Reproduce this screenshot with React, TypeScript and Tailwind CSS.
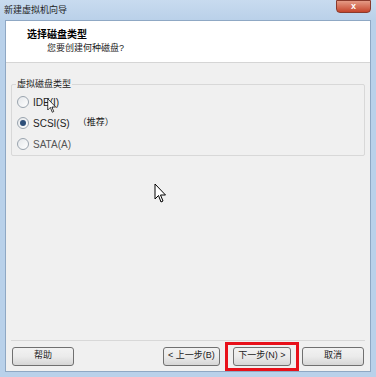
import React from "react";

const font = { fontFamily: '"Liberation Sans", "Noto Sans CJK SC", sans-serif' };

const Radio = ({ checked }: { checked?: boolean }) => (
  <span className="w-[12px] h-[12px] rounded-full border border-[#9aa4ae] bg-gradient-to-br from-[#e4e7ea] to-white flex items-center justify-center">
    {checked && <span className="w-[6px] h-[6px] rounded-full bg-[#2e4f79]" />}
  </span>
);

const Btn = ({ children, className = "" }: { children: React.ReactNode; className?: string }) => (
  <div
    className={
      "h-[19px] shrink-0 whitespace-nowrap border border-[#707070] rounded-[3px] bg-gradient-to-b from-[#f2f2f2] via-[#ebebeb] to-[#d6d6d6] flex items-center justify-center text-[9px] text-[#222] " +
      className
    }
  >
    {children}
  </div>
);

const Cursor = () => (
  <svg width="13" height="21" viewBox="0 0 13 21">
    <path d="M1 1 L1 16 L4.5 12.5 L7 19 L9 18 L6.5 12 L11.5 12 Z" fill="white" stroke="black" strokeWidth="1" />
  </svg>
);

export default function App() {
  return (
    <div className="w-[376px] h-[377px] bg-[#b9d1ea] flex flex-col overflow-hidden" style={font}>
      <div className="h-[20px] shrink-0 flex items-start justify-between bg-gradient-to-b from-[#c8dbef] to-[#bad1e9]">
        <span className="text-[9px] text-[#1e1e1e] pl-[4px] pt-[4px]">新建虚拟机向导</span>
        <div className="w-[35px] h-[13px] mr-[5px] rounded-b-[4px] bg-gradient-to-b from-[#e49a85] to-[#c4432a] border border-[#8a3a2c] flex items-center justify-center text-white text-[9px] font-bold">
          x
        </div>
      </div>
      <div className="flex-1 mx-[5px] mb-[5px] border border-[#8fa8c4] flex flex-col bg-[#f0f0f0]">
        <div className="h-[42px] shrink-0 bg-white border-b border-[#d5d5d5] pl-[21px] pt-[7px] leading-[13px]">
          <div className="font-bold text-black text-[10px]">选择磁盘类型</div>
          <div className="pl-[20px] pt-[1px] text-[#222] text-[9px]">您要创建何种磁盘?</div>
        </div>
        <div className="flex-1 flex flex-col relative">
          <div className="mt-[21px] mx-[5px] h-[72px] border border-[#d8d8d8] rounded-[2px] relative">
            <span className="absolute -top-[7px] left-[4px] px-[1px] bg-[#f0f0f0] text-[9px] leading-[12px] text-[#222]">虚拟磁盘类型</span>
            <div className="flex flex-col gap-[9px] pl-[5px] pt-[11px] text-[10px] text-[#222]">
              <div className="flex items-center gap-[4px] h-[12px]">
                <Radio />
                <span>IDE(I)</span>
              </div>
              <div className="flex items-center gap-[4px] h-[12px]">
                <Radio checked />
                <span>SCSI(S)</span>
                <span className="pl-[4px] text-[9px]">（推荐）</span>
              </div>
              <div className="flex items-center gap-[4px] h-[12px] text-[#555]">
                <Radio />
                <span>SATA(A)</span>
              </div>
            </div>
            <div className="absolute left-[35px] top-[13px] scale-75 origin-top-left">
              <Cursor />
            </div>
          </div>
          <div className="absolute left-[148px] top-[120px]">
            <Cursor />
          </div>
          <div className="flex-1" />
          <div className="h-[1px] bg-[#d8d8d8] mx-[5px]" />
          <div className="h-[30px] shrink-0 flex items-center px-[6px]">
            <Btn className="w-[62px] border-[#3c7fb1] from-[#e9f3fb] to-[#c9dff0]">帮助</Btn>
            <div className="flex-1" />
            <Btn className="w-[57px]">&lt; 上一步(B)</Btn>
            <div className="ml-[5px] w-[74px] h-[29px] shrink-0 border-[3px] border-[#e8101a] flex items-center justify-center">
              <Btn className="w-[58px] border-[#3c7fb1] from-[#eaf5fc] to-[#bfdcf1]">下一步(N) &gt;</Btn>
            </div>
            <Btn className="ml-[3px] w-[62px]">取消</Btn>
          </div>
        </div>
      </div>
    </div>
  );
}
